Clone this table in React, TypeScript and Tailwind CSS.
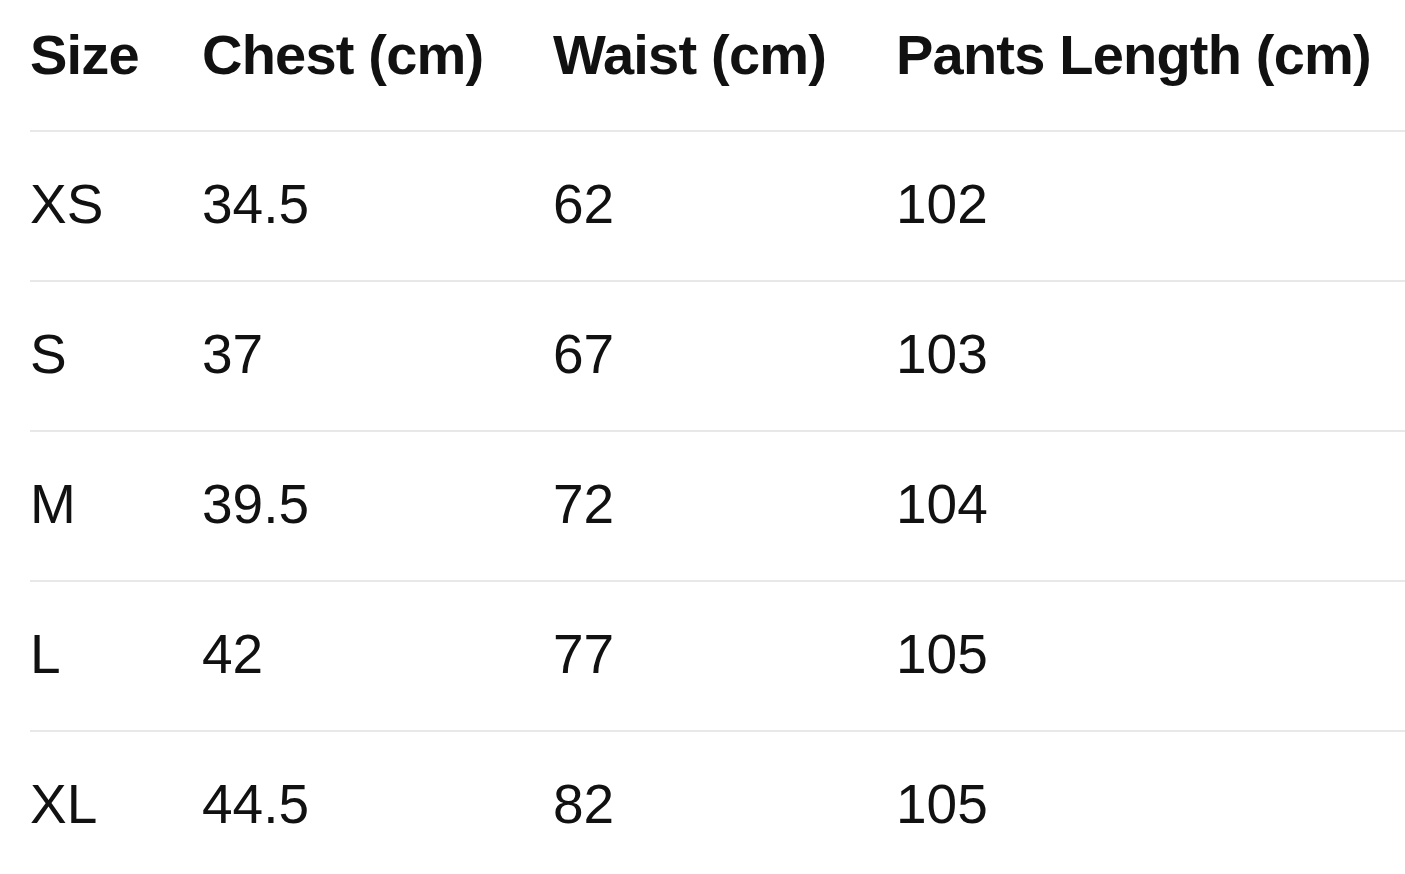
const rows = [
  { size: "XS", chest: "34.5", waist: "62", pants: "102" },
  { size: "S", chest: "37", waist: "67", pants: "103" },
  { size: "M", chest: "39.5", waist: "72", pants: "104" },
  { size: "L", chest: "42", waist: "77", pants: "105" },
  { size: "XL", chest: "44.5", waist: "82", pants: "105" },
];

const cols = "grid grid-cols-[172px_351px_343px_1fr]";

export default function App() {
  return (
    <div
      className="min-h-screen bg-white pl-[30px] text-[#111111]"
      style={{ fontFamily: '"Liberation Sans", Arial, sans-serif' }}
    >
      <div className={`${cols} h-[130px] pt-[27px] text-[56px] font-bold leading-none tracking-[-0.8px]`}>
        <div>Size</div>
        <div>Chest (cm)</div>
        <div>Waist (cm)</div>
        <div className="whitespace-nowrap">Pants Length (cm)</div>
      </div>

      {rows.map((row, index) => (
        <div
          key={index}
          className={`${cols} h-[150px] border-t-2 border-[#e8e8e8] pt-[45px] text-[55px] leading-none`}
        >
          <div>{row.size}</div>
          <div>{row.chest}</div>
          <div>{row.waist}</div>
          <div>{row.pants}</div>
        </div>
      ))}
    </div>
  );
}
